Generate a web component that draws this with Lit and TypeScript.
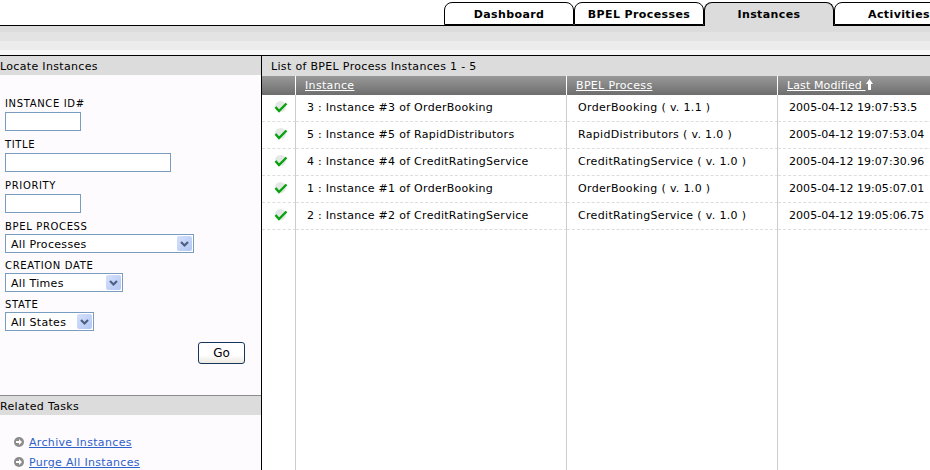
import { LitElement, html, css } from "lit";
import { customElement } from "lit/decorators.js";

const tabs = ["Dashboard", "BPEL Processes", "Instances", "Activities"];

const rows = [
  ["3 : Instance #3 of OrderBooking", "OrderBooking ( v. 1.1 )", "2005-04-12 19:07:53.5"],
  ["5 : Instance #5 of RapidDistributors", "RapidDistributors ( v. 1.0 )", "2005-04-12 19:07:53.04"],
  ["4 : Instance #4 of CreditRatingService", "CreditRatingService ( v. 1.0 )", "2005-04-12 19:07:30.96"],
  ["1 : Instance #1 of OrderBooking", "OrderBooking ( v. 1.0 )", "2005-04-12 19:05:07.01"],
  ["2 : Instance #2 of CreditRatingService", "CreditRatingService ( v. 1.0 )", "2005-04-12 19:05:06.75"],
];

const check = html`<svg width="14" height="14" viewBox="0 0 14 14">
  <circle cx="6.5" cy="6.5" r="5.5" fill="#e4e8e4"></circle>
  <path d="M1.5 7 L5 11 L12.5 3.5" fill="none" stroke="#08a30e" stroke-width="2.4"></path>
</svg>`;

const bullet = html`<svg width="10" height="10" viewBox="0 0 10 10">
  <circle cx="5" cy="5" r="5" fill="#8c8c8c"></circle>
  <path d="M2 4h3V2l3 3-3 3V6H2z" fill="#fff"></path>
</svg>`;

const chevron = html`<svg width="15" height="15" viewBox="0 0 15 15">
  <path d="M4 6 L7.5 9.5 L11 6" fill="none" stroke="#4d6185" stroke-width="2.2"></path>
</svg>`;

@customElement("app-root")
export class AppRoot extends LitElement {
  static styles = css`
    :host {
      display: flex;
      flex-direction: column;
      width: 930px;
      height: 470px;
      overflow: hidden;
      background: #fff;
      color: #000;
      font-family: "DejaVu Sans", Verdana, sans-serif;
      font-size: 11px;
      letter-spacing: 0.33px;
    }
    .tabs {
      display: flex;
      flex: none;
      height: 23px;
      padding: 2px 0 0 444px;
      border-bottom: 1px solid #000;
    }
    .tab {
      flex: none;
      box-sizing: border-box;
      width: 130px;
      height: 23px;
      border: 1px solid #000;
      border-radius: 8px 8px 0 0;
      background: #fff;
      font-weight: bold;
      letter-spacing: 0.4px;
      line-height: 24px;
      text-align: center;
    }
    .tab.active {
      height: 24px;
      background: #dcdcdc;
      border-bottom: none;
    }
    .band {
      flex: none;
      height: 29px;
      border-bottom: 1px solid #000;
      background: linear-gradient(
        #dcdcdc 0 6px,
        #e3e3e3 6px 15px,
        #ececec 15px 24px,
        #f7f7f7 24px
      );
    }
    .main {
      flex: 1;
      display: flex;
      min-height: 0;
    }
    .side {
      flex: none;
      width: 261px;
      display: flex;
      flex-direction: column;
      border-right: 1px solid #000;
      background: #fdfbfd;
    }
    .side-title {
      flex: none;
      height: 19px;
      line-height: 21px;
      background: #dcdcdc;
    }
    .form {
      flex: none;
      box-sizing: border-box;
      height: 320px;
      padding: 23px 0 0 5px;
      display: flex;
      flex-direction: column;
    }
    .label {
      height: 14px;
      line-height: 12px;
      font-size: 10px;
      letter-spacing: 0.65px;
    }
    .label.for-select {
      line-height: 14px;
    }
    .box {
      box-sizing: border-box;
      height: 19px;
      margin: 0 0 8px;
      padding: 0;
      border: 1px solid #7a9cbf;
      background: #fff;
      display: block;
    }
    .select {
      display: flex;
      align-items: center;
      justify-content: space-between;
      margin-bottom: 6px;
      padding: 0 1px 0 5px;
    }
    .select-text {
      line-height: 19px;
      padding-top: 1px;
    }
    .arrow {
      display: block;
      width: 15px;
      height: 15px;
      background: linear-gradient(135deg, #d5e0fb, #b3c7f4);
      border-radius: 2px;
    }
    .arrow svg {
      display: block;
    }
    .go {
      align-self: flex-start;
      box-sizing: border-box;
      width: 47px;
      height: 22px;
      margin: 5px 0 0 193px;
      padding: 0;
      border: 1px solid #16365c;
      border-radius: 3px;
      background: linear-gradient(#fff 60%, #ece9df);
      font: inherit;
      font-size: 12px;
    }
    .related {
      flex: 1;
      min-height: 0;
      border-top: 1px solid #8c8c8c;
    }
    .links {
      margin: 0;
      padding: 17px 0 0 14px;
      list-style: none;
    }
    .links li {
      display: flex;
      align-items: center;
      gap: 5px;
      height: 20px;
    }
    .links a {
      color: #2f62c8;
    }
    .content {
      flex: 1;
      min-width: 0;
      display: flex;
      flex-direction: column;
    }
    .content-title {
      flex: none;
      height: 20px;
      padding-left: 9px;
      line-height: 21px;
      background: #dcdcdc;
    }
    .row {
      display: grid;
      grid-template-columns: 34px 271px 211px 200px;
      width: 716px;
    }
    .row > div {
      box-sizing: border-box;
      border-right: 1px solid #ccc;
      white-space: nowrap;
    }
    .head {
      flex: none;
      height: 19px;
      background: linear-gradient(#999, #6e6e6e);
      color: #fff;
      line-height: 20px;
    }
    .head > div {
      padding-left: 9px;
      border-right-color: #fff;
    }
    .head a {
      color: #fff;
    }
    .head .sorted {
      letter-spacing: 0.12px;
    }
    .sort {
      display: inline-block;
      vertical-align: -1px;
    }
    .item {
      flex: none;
      height: 27px;
      line-height: 26px;
    }
    .item > div {
      padding-left: 11px;
      border-bottom: 1px dashed #ddd;
    }
    .item > .name {
      letter-spacing: 0.28px;
    }
    .item > .stamp {
      letter-spacing: 0.05px;
    }
    .item > .mark {
      padding: 5px 0 0 12px;
    }
    .mark svg {
      display: block;
    }
    .filler {
      flex: 1;
    }
  `;

  render() {
    return html`
      <div class="tabs">
        ${tabs.map(
          (t) => html`<div class="tab ${t === "Instances" ? "active" : ""}">${t}</div>`
        )}
      </div>
      <div class="band"></div>
      <div class="main">
        <div class="side">
          <div class="side-title">Locate Instances</div>
          <div class="form">
            <div class="label">INSTANCE ID#</div>
            <input class="box" style="width:76px" />
            <div class="label">TITLE</div>
            <input class="box" style="width:166px" />
            <div class="label">PRIORITY</div>
            <input class="box" style="width:76px;margin-bottom:7px" />
            <div class="label for-select">BPEL PROCESS</div>
            ${this.select("All Processes", 189)}
            <div class="label for-select">CREATION DATE</div>
            ${this.select("All Times", 118)}
            <div class="label for-select">STATE</div>
            ${this.select("All States", 89)}
            <button class="go">Go</button>
          </div>
          <div class="related">
            <div class="side-title">Related Tasks</div>
            <ul class="links">
              <li>${bullet}<a href="#">Archive Instances</a></li>
              <li>${bullet}<a href="#">Purge All Instances</a></li>
            </ul>
          </div>
        </div>
        <div class="content">
          <div class="content-title">List of BPEL Process Instances 1 - 5</div>
          <div class="row head">
            <div></div>
            <div><a href="#">Instance</a></div>
            <div><a href="#">BPEL Process</a></div>
            <div>
              <a class="sorted" href="#">Last Modified </a><svg class="sort" width="7" height="11" viewBox="0 0 7 11">
                <path d="M3.5 0 L7 5 H5 V11 H2 V5 H0 Z" fill="#fff"></path>
              </svg>
            </div>
          </div>
          ${rows.map(
            (r) => html`<div class="row item">
              <div class="mark">${check}</div>
              <div class="name">${r[0]}</div>
              <div>${r[1]}</div>
              <div class="stamp">${r[2]}</div>
            </div>`
          )}
          <div class="row filler"><div></div><div></div><div></div><div></div></div>
        </div>
      </div>
    `;
  }

  select(text: string, width: number) {
    return html`<div class="box select" style="width:${width}px">
      <span class="select-text">${text}</span><span class="arrow">${chevron}</span>
    </div>`;
  }
}
